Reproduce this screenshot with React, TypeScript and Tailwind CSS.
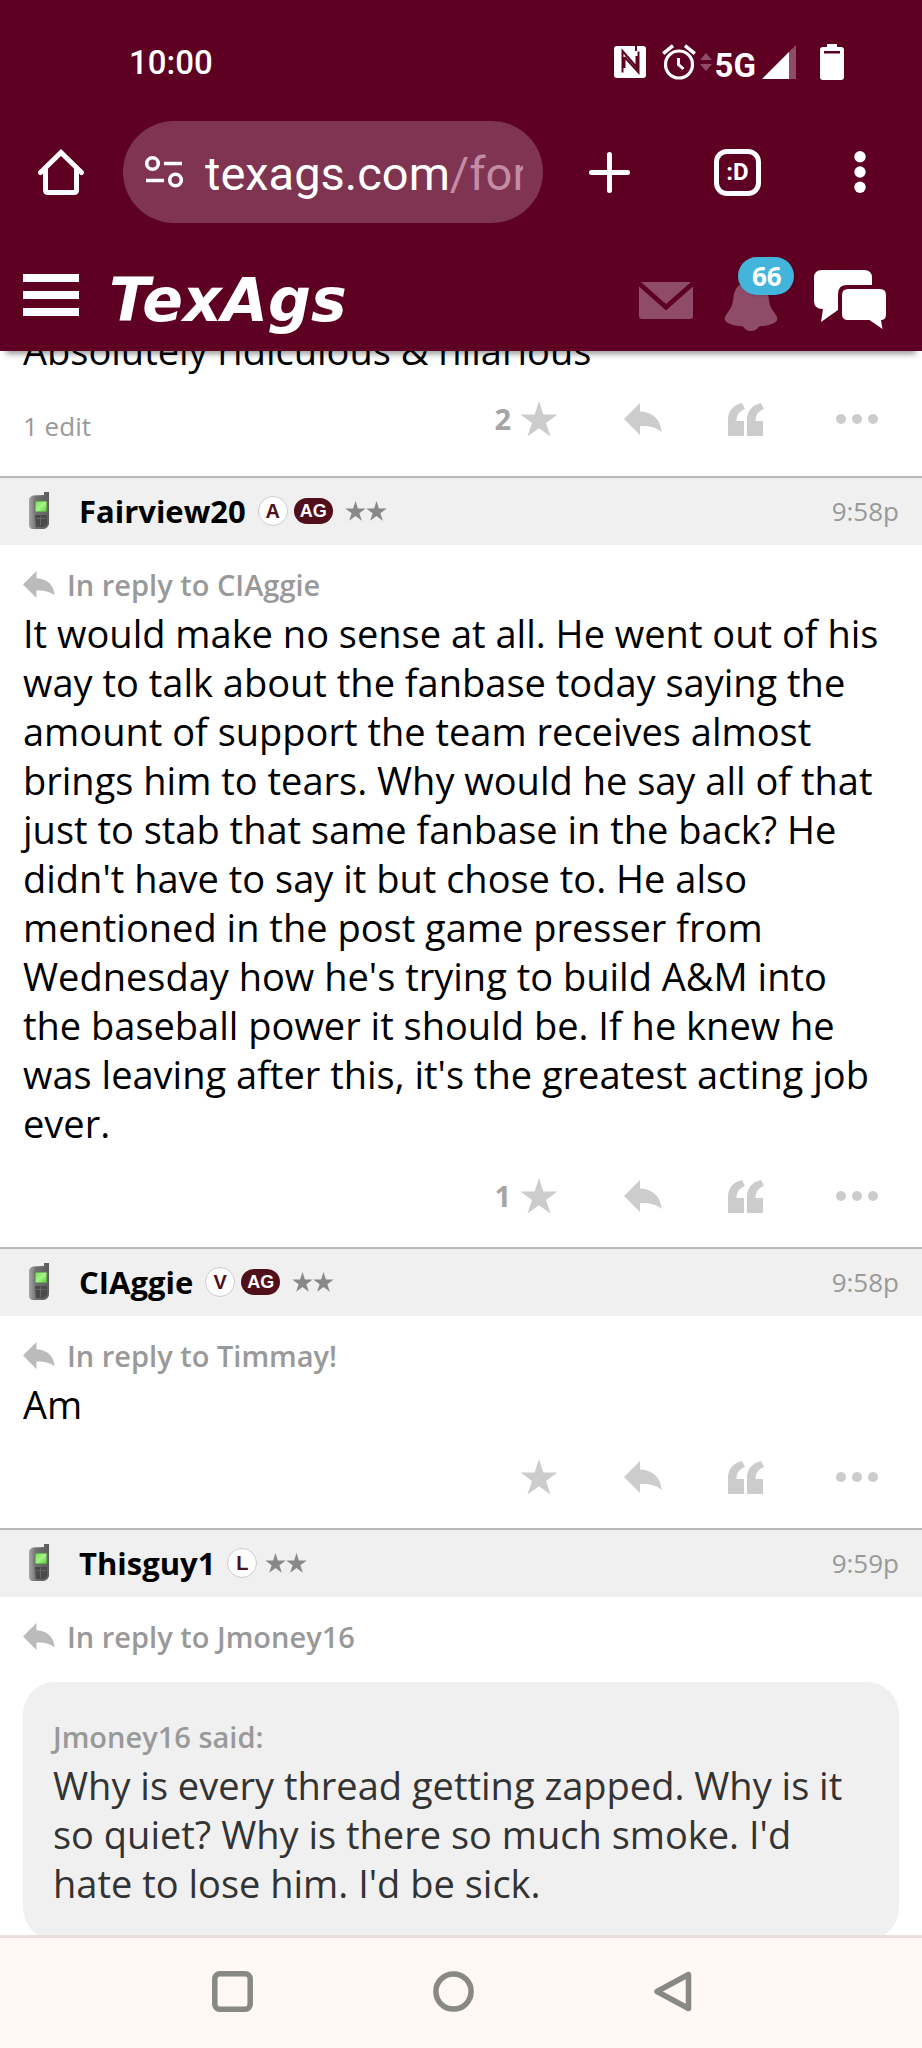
import type { ReactNode } from "react";

const REPLY_PATH = "M0 16 L16 0 V8.5 C29 9 37 17 37.500 29 C33 24.500 26 22.800 16 23 V32 Z";

function ReplyArrow({ className }: { className: string }) {
  return (
    <svg viewBox="0 0 38 32" className={className} fill="currentColor" aria-hidden="true">
      <path d={REPLY_PATH} />
    </svg>
  );
}

function Star({ className }: { className: string }) {
  return (
    <svg viewBox="0 0 38 36" className={className} fill="currentColor" aria-hidden="true">
      <path d="M19 0 L23.3 13.5 H37.500 L26 22 L30.500 35.500 L19 27.200 L7.500 35.500 L12 22 L0.500 13.500 H14.700 Z" />
    </svg>
  );
}

function StatusBar() {
  return (
    <div className="flex h-[121px] items-start justify-between pt-[42px] pr-[78px] pl-[129px]">
      <time className="font-[Roboto,sans-serif] text-[33px] leading-[42px] font-medium">10:00</time>
      <div className="flex h-10 items-center">
        <svg viewBox="0 0 32 32" className="h-8 w-8" aria-label="NFC">
          <rect width="32" height="32" rx="3" fill="#fff" />
          <path d="M8.500 26.500 V5 L22.500 21 V10 M10.500 11 V22 M10.500 11 L24.500 26.500 V5.500" fill="none" stroke="#5d0022" strokeWidth="2" />
          <path d="M22 0 V5" stroke="#5d0022" strokeWidth="2" />
        </svg>
        <svg viewBox="0 0 34 36" className="ml-4 h-9 w-[34px]" fill="none" stroke="#fff" aria-label="Alarm">
          <circle cx="17" cy="20.500" r="13.500" strokeWidth="3.200" />
          <path d="M1.200 9.700 L11 1.700 M32.800 9.700 L23 1.700" strokeWidth="3.600" />
          <path d="M16.500 14 V20.500 L21.500 25" strokeWidth="3" />
        </svg>
        <svg viewBox="0 0 12 18" className="ml-1 h-[18px] w-3" fill="#8e4c68" aria-hidden="true">
          <path d="M6 0 L12 7 H0 Z M6 18 L12 11 H0 Z" />
        </svg>
        <span className="ml-[3px] pt-2 font-[Roboto,sans-serif] text-[33px] leading-9 font-bold">5G</span>
        <svg viewBox="0 0 34 34" className="ml-1.5 h-[34px] w-[34px]" aria-label="Signal">
          <path d="M0 34 L34 0 V34 Z" fill="#8e4c68" />
          <path d="M0 34 L27 7 V34 Z" fill="#fff" />
        </svg>
        <svg viewBox="0 0 24 36" className="ml-6 h-9 w-6" aria-label="Battery">
          <path d="M7 0 H17 V3 H21 Q24 3 24 6 V33 Q24 36 21 36 H3 Q0 36 0 33 V6 Q0 3 3 3 H7 Z" fill="#fff" />
          <rect x="4" y="7" width="16" height="2.500" fill="#5d0022" />
        </svg>
      </div>
    </div>
  );
}

function BrowserBar() {
  return (
    <div className="flex h-[102px] items-center pr-14 pl-[38px]">
      <button type="button" aria-label="Home" className="shrink-0">
        <svg viewBox="0 0 46 46" className="h-[46px] w-[46px]" fill="none" stroke="#fff" strokeWidth="5" strokeLinejoin="round">
          <path d="M7.500 20 V41 Q7.500 43.500 10 43.500 H36 Q38.500 43.500 38.500 41 V20" />
          <path d="M2.500 23.500 L23 3.500 L43.500 23.500" strokeLinecap="round" strokeLinejoin="miter" />
        </svg>
      </button>
      <div className="ml-[39px] flex h-[102px] min-w-0 flex-1 items-center rounded-full bg-[#7f3451] pr-5 pl-[22px]">
        <svg viewBox="0 0 38 34" className="h-[34px] w-[38px] shrink-0" fill="none" stroke="#fff" strokeWidth="3.600" aria-hidden="true">
          <circle cx="7.500" cy="8.500" r="5.800" />
          <circle cx="30.500" cy="25" r="5.800" />
          <path d="M19 8.500 H37 M1 25.500 H19" />
        </svg>
        <button type="button" className="ml-[22px] flex-1 overflow-hidden pt-1 text-left font-[Roboto,sans-serif] text-[47px] leading-[60px] whitespace-nowrap">
          texags.com<span className="text-[#c58ba5]">/for</span>
        </button>
      </div>
      <button type="button" aria-label="New tab" className="ml-[46px] shrink-0">
        <svg viewBox="0 0 41 41" className="h-[41px] w-[41px]" stroke="#fff" strokeWidth="5" strokeLinecap="round">
          <path d="M20.500 2.500 V38.500 M2.500 20.500 H38.500" />
        </svg>
      </button>
      <button
        type="button"
        aria-label="Tabs"
        className="ml-[84px] flex h-[47px] w-[47px] shrink-0 items-center justify-center rounded-[13px] border-[5px] border-white font-[Roboto,sans-serif] text-[24px] leading-7 font-bold"
      >
        :D
      </button>
      <button type="button" aria-label="Menu" className="ml-[93px] shrink-0">
        <svg viewBox="0 0 12 42" className="h-[42px] w-3" fill="#fff">
          <circle cx="6" cy="5.800" r="5.700" />
          <circle cx="6" cy="21" r="5.700" />
          <circle cx="6" cy="36.200" r="5.700" />
        </svg>
      </button>
    </div>
  );
}

function SiteBar() {
  return (
    <div className="flex h-32 items-center pt-5 pr-9 pl-[23px]">
      <button type="button" aria-label="Open menu" className="flex w-14 shrink-0 flex-col gap-[9px] pb-1">
        <span className="h-2 bg-white" />
        <span className="h-2 bg-white" />
        <span className="h-2 bg-white" />
      </button>
      <a href="#home" className="ml-[30px] pt-1.5 font-['DejaVu_Sans',sans-serif] text-[60px] leading-[66px] font-bold italic">
        TexAgs
      </a>
      <nav className="ml-auto flex items-center">
        <a href="#mail" aria-label="Mail">
          <svg viewBox="0 0 54 37" className="mt-[22px] mb-4 h-[37px] w-[54px]" fill="#8e4c68">
            <path d="M2 0 H52 L27 22 Z" />
            <path d="M0 4.500 L27 28.500 L54 4.500 V34 Q54 37 51 37 H3 Q0 37 0 34 Z" />
          </svg>
        </a>
        <a href="#notifications" aria-label="Notifications" className="relative ml-[31px]">
          <svg viewBox="0 0 54 52" className="mt-4 h-[52px] w-[54px]" fill="#8e4c68">
            <path d="M27 2 C16 2 10.500 9 9.500 18 C8.500 29 5 31 1.500 37 C-2 43 6 46 19 47.500 Q22 52 27 52 Q32 52 35 47.500 C48 46 56 43 52.500 37 C49 31 45.500 29 44.500 18 C43.500 9 38 2 27 2 Z" />
          </svg>
          <span className="absolute -top-1.5 left-3.5 rounded-full bg-[#43b5dc] pr-3 pl-3.5 font-['Open_Sans',sans-serif] text-[26px] leading-[38px] font-bold shadow">66</span>
        </a>
        <a href="#forums" aria-label="Forums" className="ml-9">
          <svg viewBox="0 0 72 59" className="mt-1 h-[59px] w-[72px]" fill="#fff">
            <path d="M8 0 H50 Q58 0 58 8 V15 H33 Q24 15 24 24 V40 L7 52 L9 39 Q0 39 0 31 V8 Q0 0 8 0 Z" />
            <path d="M34 19 H66 Q72 19 72 25 V44 Q72 50 67 50 L68.500 59 L55.500 50 H34 Q28 50 28 44 V25 Q28 19 34 19 Z" />
          </svg>
        </a>
      </nav>
    </div>
  );
}

function PhoneAvatar() {
  return (
    <svg viewBox="0 0 22 38" className="h-[38px] w-[22px]" aria-hidden="true">
      <defs>
        <linearGradient id="phone-body" x1="0" x2="1">
          <stop offset="0" stopColor="#a8a8a8" />
          <stop offset="0.350" stopColor="#707070" />
          <stop offset="1" stopColor="#5c5c5c" />
        </linearGradient>
        <linearGradient id="phone-screen" x1="0" x2="1" y1="0" y2="1">
          <stop offset="0" stopColor="#6fe04b" />
          <stop offset="0.500" stopColor="#a5f488" />
          <stop offset="1" stopColor="#4fd02c" />
        </linearGradient>
      </defs>
      <path d="M16 0 H21 V32 Q20 36 16 37 H4 Q1 36 1 33 V7 Q2 4 5 3.500 L16 3 Z" fill="url(#phone-body)" />
      <rect x="7" y="9" width="12" height="11" rx="1" fill="url(#phone-screen)" stroke="#5f7a58" />
      <path d="M7 23 H19 V32 L16 35 H8 Z" fill="#4a4a4a" />
      <path d="M8 26.500 H18 M12.500 23.500 V34" stroke="#666" />
    </svg>
  );
}

function Actions({ count, note }: { count?: number; note?: string }) {
  return (
    <div className="flex h-14 items-center pr-11 pl-[23px] text-[#ccc]">
      {note && <span className="pt-3.5 text-[26px] leading-9 text-[#999]">{note}</span>}
      <div className="ml-auto flex items-center gap-[66px]">
        <button type="button" aria-label="Star this post" className="flex items-center gap-[9px]">
          {count !== undefined && <span className="text-[29px] leading-9 font-bold text-[#a5a5a5]">{count}</span>}
          <Star className="h-9 w-[38px]" />
        </button>
        <button type="button" aria-label="Reply">
          <ReplyArrow className="h-8 w-[38px]" />
        </button>
        <button type="button" aria-label="Quote">
          <svg viewBox="0 0 36 33" className="h-[33px] w-9" fill="currentColor">
            <path d="M0 33 V17 C0 8 5 2 14 0 L17 6 C11.500 8 8.500 12 8.500 18 H16 V33 Z" />
            <path d="M19 33 V17 C19 8 24 2 33 0 L36 6 C30.500 8 27.500 12 27.500 18 H35 V33 Z" />
          </svg>
        </button>
        <button type="button" aria-label="More" className="pl-1.5">
          <svg viewBox="0 0 42 10" className="h-2.5 w-[42px]" fill="currentColor">
            <circle cx="5" cy="5" r="5" />
            <circle cx="21" cy="5" r="5" />
            <circle cx="37" cy="5" r="5" />
          </svg>
        </button>
      </div>
    </div>
  );
}

type PostProps = {
  name: string;
  letter: string;
  ag?: boolean;
  time: string;
  replyTo: string;
  children: ReactNode;
};

function Post({ name, letter, ag, time, replyTo, children }: PostProps) {
  return (
    <article>
      <header className="flex h-[69px] items-center border-t-2 border-[#b8b8b8] bg-[#f0f0f0] pr-[23px] pb-0.5 pl-7">
        <PhoneAvatar />
        <a href="#user" className="ml-[29px] text-[31px] leading-10 font-bold">{name}</a>
        <span className="ml-3 flex h-[30px] w-[30px] items-center justify-center rounded-full border border-[#ccc] bg-white font-['Liberation_Sans',sans-serif] text-[20px] leading-none font-bold text-[#500f1b]">
          {letter}
        </span>
        {ag && (
          <span className="mr-1 ml-1.5 flex h-[26px] w-[39px] items-center justify-center rounded-full bg-[#500f1b] font-['Liberation_Sans',sans-serif] text-[18px] leading-none font-bold text-white">
            AG
          </span>
        )}
        <span className="ml-2 flex text-[#888]">
          <Star className="h-5 w-[21px]" />
          <Star className="h-5 w-[21px]" />
        </span>
        <time className="ml-auto text-[26px] leading-9 text-[#999]">{time}</time>
      </header>
      <a href="#parent" className="mx-[23px] mt-[19px] flex h-[41px] items-center gap-3 text-[29px] leading-10 font-semibold text-[#999]">
        <ReplyArrow className="h-[27px] w-8 text-[#bbb]" />
        In reply to {replyTo}
      </a>
      {children}
    </article>
  );
}

function Body({ children }: { children: ReactNode }) {
  return <p className="pt-1 pr-8 pl-[23px] text-[38px] leading-[49px]">{children}</p>;
}

export default function App() {
  return (
    <div className="flex h-screen flex-col overflow-hidden bg-white font-['Open_Sans',sans-serif] text-black">
      <header className="relative z-10 shrink-0 bg-[#5d0022] text-white shadow-[0_9px_6px_-6px_rgba(0,0,0,0.4)]">
        <StatusBar />
        <BrowserBar />
        <SiteBar />
      </header>

      <main className="min-h-0 flex-1 overflow-hidden">
        <article className="-mt-[29px] pb-[29px]">
          <Body>Absolutely ridiculous &amp; hilarious</Body>
          <div className="pt-4">
            <Actions count={2} note="1 edit" />
          </div>
        </article>

        <Post name="Fairview20" letter="A" ag time="9:58p" replyTo="CIAggie">
          <Body>
            It would make no sense at all. He went out of his way to talk about the fanbase today saying the amount of
            support the team receives almost brings him to tears. Why would he say all of that just to stab that same
            fanbase in the back? He didn't have to say it but chose to. He also mentioned in the post game presser from
            Wednesday how he's trying to build A&amp;M into the baseball power it should be. If he knew he was leaving
            after this, it's the greatest acting job ever.
          </Body>
          <div className="pt-5 pb-[23px]">
            <Actions count={1} />
          </div>
        </Post>

        <Post name="CIAggie" letter="V" ag time="9:58p" replyTo="Timmay!">
          <Body>Am</Body>
          <div className="pt-5 pb-[23px]">
            <Actions />
          </div>
        </Post>

        <Post name="Thisguy1" letter="L" time="9:59p" replyTo="Jmoney16">
          <blockquote className="mx-[23px] mt-[25px] rounded-[32px] bg-[#f0f0f0] px-[30px] pt-[34px] pb-8 text-[#333]">
            <cite className="block text-[29px] leading-[41px] font-semibold text-[#999] not-italic">Jmoney16 said:</cite>
            <p className="pt-1 text-[38px] leading-[49px]">
              Why is every thread getting zapped. Why is it so quiet? Why is there so much smoke. I'd hate to lose him.
              I'd be sick.
            </p>
          </blockquote>
        </Post>
      </main>

      <nav className="z-10 flex h-[113px] shrink-0 justify-center border-t-[3px] border-[#ebdfd9] bg-[#fff8f5] pt-[33px] text-[#888884]">
        <div className="flex w-full items-start justify-between pr-[228px] pl-[212px]">
          <button type="button" aria-label="Recent apps">
            <svg viewBox="0 0 41 41" className="h-[41px] w-[41px]" fill="none" stroke="currentColor" strokeWidth="5.500">
              <rect x="2.800" y="2.800" width="35.400" height="35.400" rx="5" />
            </svg>
          </button>
          <button type="button" aria-label="Home screen">
            <svg viewBox="0 0 41 41" className="h-[41px] w-[41px]" fill="none" stroke="currentColor" strokeWidth="5.500">
              <circle cx="20.500" cy="20.500" r="17.600" />
            </svg>
          </button>
          <button type="button" aria-label="Back">
            <svg viewBox="0 0 41 41" className="h-[41px] w-[41px]" fill="none" stroke="currentColor" strokeWidth="5.500" strokeLinejoin="round">
              <path d="M35.500 3.500 V37.500 L4 20.500 Z" />
            </svg>
          </button>
        </div>
      </nav>
    </div>
  );
}
